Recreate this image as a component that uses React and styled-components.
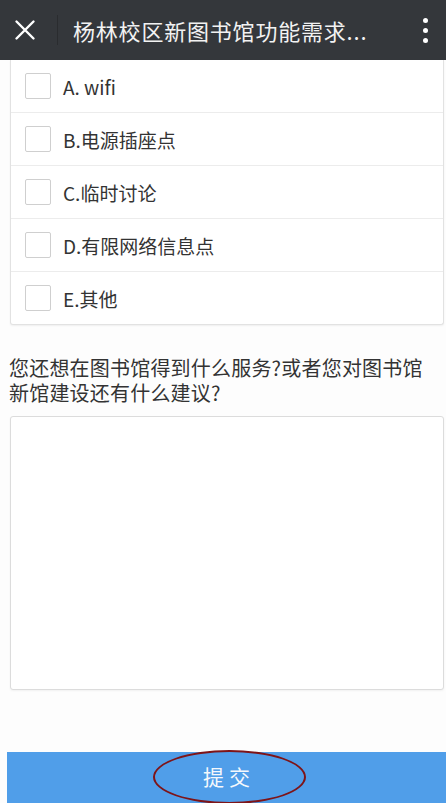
import styled, { createGlobalStyle } from "styled-components"

const GlobalStyle = createGlobalStyle`
    html, body {
        margin: 0;
        padding: 0;
        background: #fdfdfd;
        font-family: "Noto Sans CJK SC", "Noto Sans", sans-serif;
        color: #333;
    }
    * {
        box-sizing: border-box;
    }
`

const Page = styled.div`
    width: 446px;
    height: 803px;
    overflow: hidden;
    display: flex;
    flex-direction: column;
    background: #fdfdfd;
`

const TopBar = styled.div`
    height: 60px;
    flex-shrink: 0;
    background: #34373b;
    display: flex;
    align-items: center;
    color: #fff;
`

const CloseBtn = styled.div`
    width: 50px;
    height: 60px;
    display: flex;
    align-items: center;
    justify-content: center;
`

const Divider = styled.div`
    width: 1px;
    height: 30px;
    background: #2a2c2f;
    margin-left: 7px;
`

const Title = styled.div`
    flex: 1;
    margin-left: 15px;
    font-size: 22px;
    letter-spacing: 0.8px;
    color: #f2f2f2;
    white-space: nowrap;
`

const MoreBtn = styled.div`
    width: 44px;
    display: flex;
    flex-direction: column;
    align-items: center;
    gap: 5px;
    padding-left: 2px;
`

const Dot = styled.span`
    width: 5px;
    height: 5px;
    border-radius: 50%;
    background: #fff;
`

const Content = styled.div`
    padding: 0 2px 0 10px;
    display: flex;
    flex-direction: column;
`

const OptionCard = styled.div`
    border: 1px solid #e2e2e2;
    border-top: none;
    border-radius: 0 0 3px 3px;
    background: #fff;
    box-shadow: 0 1px 2px rgba(0, 0, 0, 0.06);
`

const OptionRow = styled.div`
    height: ${props => props.h || 53}px;
    display: flex;
    align-items: center;
    padding-left: 14px;
    border-top: ${props => props.first ? "none" : "1px solid #ececec"};
    font-size: 19px;
    color: #333;
`

const Box = styled.span`
    width: 26px;
    height: 26px;
    border: 1px solid #cfcfcf;
    border-radius: 2px;
    background: #fff;
    margin-right: 12px;
    flex-shrink: 0;
`

const Question = styled.div`
    margin-top: 30px;
    margin-left: -1px;
    padding-right: 8px;
    font-size: 20px;
    line-height: 25px;
    color: #333;
    letter-spacing: 0.2px;
`

const TextArea = styled.textarea`
    margin-top: 11px;
    height: 274px;
    border: 1px solid #dcdcdc;
    border-radius: 3px;
    background: #fff;
    resize: none;
    outline: none;
    box-shadow: 0 1px 2px rgba(0, 0, 0, 0.05);
`

const SubmitWrap = styled.div`
    margin-top: 62px;
    padding-left: 7px;
    position: relative;
`

const SubmitButton = styled.button`
    width: 100%;
    height: 60px;
    border: none;
    background: #509ee9;
    color: #f4f8fc;
    font-family: "Noto Sans CJK SC", sans-serif;
    font-size: 21px;
    letter-spacing: 5px;
    display: flex;
    justify-content: center;
    padding: 9px 0 0 5px;
`

const Mark = styled.span`
    position: absolute;
    left: 153px;
    top: -2px;
    width: 153px;
    height: 54px;
    border: 2px solid #7e1418;
    border-radius: 50%;
    pointer-events: none;
`

const options = [
    { label: "A. wifi", h: 52, first: true },
    { label: "B.电源插座点" },
    { label: "C.临时讨论" },
    { label: "D.有限网络信息点" },
    { label: "E.其他" },
]

const App = () => {
    return (
        <Page>
            <GlobalStyle />
            <TopBar>
                <CloseBtn>
                    <svg width="22" height="22" viewBox="0 0 22 22">
                        <path d="M2.5 2.5L19.5 19.5M19.5 2.5L2.5 19.5" stroke="#fff" strokeWidth="2.4" strokeLinecap="round" />
                    </svg>
                </CloseBtn>
                <Divider />
                <Title>杨林校区新图书馆功能需求...</Title>
                <MoreBtn>
                    <Dot />
                    <Dot />
                    <Dot />
                </MoreBtn>
            </TopBar>
            <Content>
                <OptionCard>
                    {options.map(o => (
                        <OptionRow key={o.label} h={o.h} first={o.first}>
                            <Box />
                            {o.label}
                        </OptionRow>
                    ))}
                </OptionCard>
                <Question>您还想在图书馆得到什么服务?或者您对图书馆新馆建设还有什么建议?</Question>
                <TextArea />
            </Content>
            <SubmitWrap>
                <SubmitButton>提交</SubmitButton>
                <Mark />
            </SubmitWrap>
        </Page>
    )
}

export default App
